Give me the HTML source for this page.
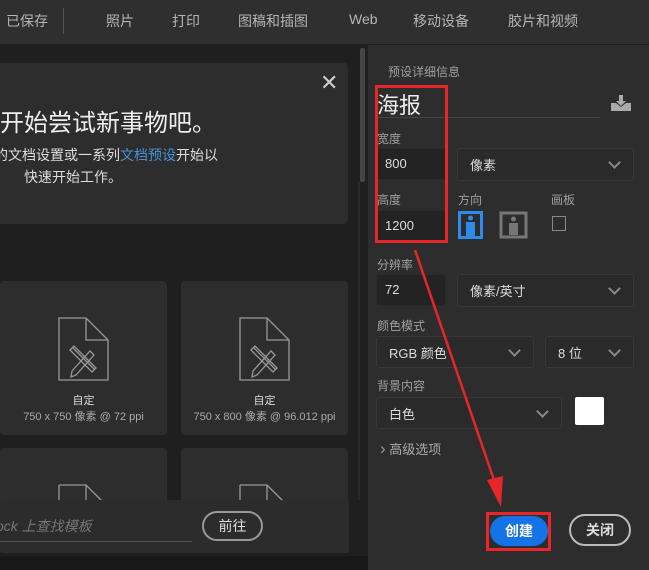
<!DOCTYPE html><html><head><meta charset="utf-8"><style>
*{margin:0;padding:0;box-sizing:border-box}
body{width:649px;height:570px;overflow:hidden;background:#1f1f1f;font-family:"Liberation Sans","Noto Sans CJK SC",sans-serif;position:relative;color:#ccc}
.a{position:absolute}
.top{left:0;top:0;width:649px;height:44px;background:#2f2f2f}
.top span{position:absolute;top:11px;font-size:14px;color:#b5b5b5}
.card{background:#2d2d2d;border-radius:4px}
.lbl{font-size:12px;color:#a0a0a0}
.inp{background:#232323;border:1px solid #2a2a2a;border-radius:3px;font-size:13px;color:#ddd;padding:7px 0 0 8px}
.dd{background:#2a2a2a;border:1px solid #383838;border-radius:3px;font-size:13px;color:#ddd;padding:6px 0 0 12px}
.dd:after{content:"";position:absolute;right:14px;top:9px;width:7px;height:7px;border-right:2px solid #888;border-bottom:2px solid #888;transform:rotate(45deg)}
</style></head><body>
<div class="a top">
<span style="left:6px">已保存</span>
<div class="a" style="left:63px;top:8px;width:1px;height:26px;background:#555"></div>
<span style="left:106px">照片</span><span style="left:172px">打印</span><span style="left:238px">图稿和插图</span><span style="left:349px">Web</span><span style="left:413px">移动设备</span><span style="left:508px">胶片和视频</span>
</div>
<div class="a card" style="left:-4px;top:63px;width:352px;height:161px"></div>
<div class="a" style="left:320px;top:70px;font-size:22px;color:#ccc">✕</div>
<div class="a" style="left:0;top:103px;font-size:24px;color:#eee;white-space:nowrap">开始尝试新事物吧。</div>
<div class="a" style="left:-6px;top:145px;font-size:14px;color:#ddd;white-space:nowrap">的文档设置或一系列<span style="color:#4a90d9">文档预设</span>开始以</div>
<div class="a" style="left:24px;top:167px;font-size:14px;color:#ddd">快速开始工作。</div>
<div class="a" style="left:360px;top:48px;width:5px;height:134px;background:#454545;border-radius:2px"></div>
<div class="a" style="left:358px;top:182px;width:2px;height:318px;background:#2a2a2a"></div>

<div class="a card" style="left:0;top:281px;width:167px;height:154px"></div>
<div class="a card" style="left:181px;top:281px;width:167px;height:154px"></div>
<div class="a card" style="left:0;top:448px;width:167px;height:60px"></div>
<div class="a card" style="left:181px;top:448px;width:167px;height:60px"></div>
<svg class="a" style="left:0;top:281px" width="349" height="227" fill="none" stroke="#999" stroke-width="1.3">
<g><path d="M59 37H86L108 59V99H59Z M86 37V59H108"/><path d="M72 90L90 70l4 4L76 94l-5 2z M72 66l22 22M70 69l4-4 22 22-4 4z"/></g>
<g transform="translate(181 0)"><path d="M59 37H86L108 59V99H59Z M86 37V59H108"/><path d="M72 90L90 70l4 4L76 94l-5 2z M72 66l22 22M70 69l4-4 22 22-4 4z"/></g>
<path d="M59 204H86L108 226 M59 204V227 M86 204V226"/><path d="M240 204H267L289 226 M240 204V227 M267 204V226"/>
</svg>
<div class="a" style="left:0;top:392px;width:167px;text-align:center;font-size:11px;color:#ddd">自定<br><span style="color:#aaa">750 x 750 像素 @ 72 ppi</span></div>
<div class="a" style="left:181px;top:392px;width:167px;text-align:center;font-size:11px;color:#ddd">自定<br><span style="color:#aaa">750 x 800 像素 @ 96.012 ppi</span></div>
<div class="a" style="left:0;top:500px;width:349px;height:53px;background:#2c2c2c;border-radius:3px"></div>
<div class="a" style="left:-4px;top:516px;font-size:14px;color:#777;font-style:italic">ock 上查找模板</div>
<div class="a" style="left:0;top:541px;width:192px;height:1px;background:#555"></div>
<div class="a" style="left:202px;top:511px;width:61px;height:30px;border:2px solid #999;border-radius:15px;font-size:14px;color:#ddd;text-align:center;line-height:26px">前往</div>

<div class="a" style="left:368px;top:45px;width:281px;height:525px;background:#2d2d2d"></div>
<div class="a lbl" style="left:388px;top:63px">预设详细信息</div>
<div class="a" style="left:377px;top:88px;font-size:22px;color:#eee">海报</div>
<div class="a" style="left:376px;top:117px;width:224px;height:1px;background:#444"></div>
<svg class="a" style="left:610px;top:94px" width="24" height="18"><path d="M9 1h4v6h3l-5 5-5-5h3z" fill="#aaa"/><path d="M1 9h5l5 4 5-4h5v8H1z" fill="#aaa"/></svg>
<div class="a lbl" style="left:377px;top:130px">宽度</div>
<div class="a inp" style="left:376px;top:148px;width:70px;height:32px">800</div>
<div class="a dd" style="left:457px;top:148px;width:177px;height:33px">像素</div>
<div class="a lbl" style="left:377px;top:191px">高度</div>
<div class="a inp" style="left:376px;top:210px;width:70px;height:32px">1200</div>
<div class="a lbl" style="left:458px;top:191px">方向</div>
<div class="a lbl" style="left:551px;top:191px">画板</div>
<svg class="a" style="left:458px;top:211px" width="72" height="28">
<rect x="1.5" y="1.5" width="22" height="25" fill="none" stroke="#2d8ceb" stroke-width="3"/><circle cx="12.5" cy="7" r="2.5" fill="#2d8ceb"/><path d="M8 11h9v14H8z" fill="#2d8ceb"/>
<rect x="43" y="2" width="25" height="24" fill="none" stroke="#777" stroke-width="3"/><circle cx="55.5" cy="8" r="2.5" fill="#777"/><path d="M51 12h9v12h-9z" fill="#777"/>
</svg>
<div class="a" style="left:552px;top:216px;width:14px;height:15px;border:1.5px solid #888"></div>
<div class="a lbl" style="left:377px;top:256px">分辨率</div>
<div class="a inp" style="left:376px;top:274px;width:70px;height:32px">72</div>
<div class="a dd" style="left:457px;top:274px;width:177px;height:33px">像素/英寸</div>
<div class="a lbl" style="left:377px;top:317px">颜色模式</div>
<div class="a dd" style="left:376px;top:336px;width:158px;height:32px">RGB 颜色</div>
<div class="a dd" style="left:545px;top:336px;width:89px;height:32px">8 位</div>
<div class="a lbl" style="left:377px;top:377px">背景内容</div>
<div class="a dd" style="left:376px;top:397px;width:186px;height:32px">白色</div>
<div class="a" style="left:575px;top:397px;width:29px;height:28px;background:#fff;border-radius:2px"></div>
<div class="a" style="left:380px;top:439px;font-size:13px;color:#aaa"><span style="font-size:17px;color:#999;line-height:13px">›</span> 高级选项</div>
<div class="a" style="left:490px;top:516px;width:58px;height:30px;background:#1473e6;border-radius:15px;color:#fff;font-size:14px;font-weight:bold;text-align:center;line-height:30px">创建</div>
<div class="a" style="left:569px;top:514px;width:62px;height:32px;border:2px solid #bbb;border-radius:16px;color:#ddd;font-size:14px;font-weight:bold;text-align:center;line-height:28px">关闭</div>
<div class="a" style="left:375px;top:85px;width:73px;height:158px;border:3px solid #e8262a"></div>
<div class="a" style="left:486px;top:512px;width:65px;height:39px;border:3px solid #e8262a"></div>
<svg class="a" style="left:0;top:0" width="649" height="570"><path d="M415 250L494 480" stroke="#e8262a" stroke-width="2.5"/><path d="M487 480L503 476L501 507Z" fill="#e8262a"/></svg>
<div class="a" style="left:0;top:556px;width:368px;height:14px;background:#181818"></div>
</body></html>
